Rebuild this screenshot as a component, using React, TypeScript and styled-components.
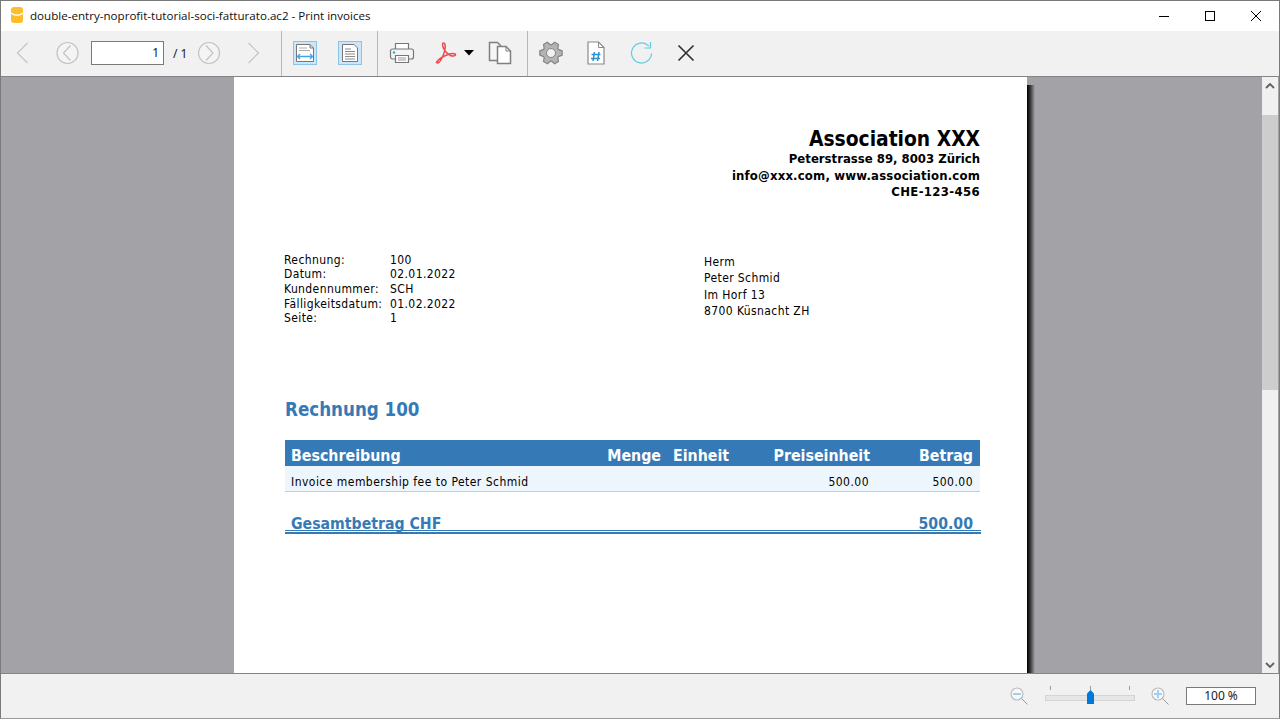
import { createGlobalStyle } from 'styled-components';
import styled from 'styled-components';

const GlobalStyle = createGlobalStyle`
	html, body {
		margin: 0;
		padding: 0;
		background: #fff;
		overflow: hidden;
	}
	* {
		box-sizing: border-box;
	}
`;

const docFont = `'DejaVu Sans Condensed', 'DejaVu Sans', sans-serif`;
const uiFont = `'Noto Sans', 'Open Sans', sans-serif`;

const Window = styled.div`
	width: 1280px;
	height: 719px;
	display: flex;
	flex-direction: column;
	border: 1px solid #7a7a7a;
	border-bottom-color: #9a9a9a;
	font-family: ${uiFont};
	color: #000;
`;

const TitleBar = styled.div`
	height: 30px;
	display: flex;
	align-items: center;
	background: #fff;
	padding-left: 9px;
	flex: none;
`;

const TitleText = styled.span`
	margin-left: 6px;
	font-size: 11.6px;
	line-height: 30px;
	color: #101010;
	font-family: 'Open Sans', sans-serif;
`;

const WindowButtons = styled.div`
	margin-left: auto;
	display: flex;
	align-items: center;
`;

const WindowButton = styled.div`
	width: 46px;
	height: 30px;
	display: flex;
	align-items: center;
	justify-content: center;
`;

const Toolbar = styled.div`
	height: 46px;
	flex: none;
	display: flex;
	align-items: center;
	background: #f1f1f1;
	border-bottom: 1px solid #838388;
	padding-left: 15px;
`;

const ToolSlot = styled.div<{ $w: number; $pad?: number }>`
	width: ${(p) => p.$w}px;
	height: 45px;
	padding-left: ${(p) => p.$pad ?? 0}px;
	padding-bottom: 1px;
	flex: none;
	display: flex;
	align-items: center;
`;

const Divider = styled.div`
	width: 1px;
	height: 45px;
	background: #b6b6b6;
	flex: none;
`;

const PageInput = styled.div`
	width: 73px;
	height: 24px;
	margin-bottom: 1px;
	border: 1px solid #7a7a7a;
	background: #fff;
	font-size: 12px;
	line-height: 22px;
	text-align: right;
	padding-right: 4px;
	color: #222;
	flex: none;
`;

const PageTotal = styled.span`
	width: 34px;
	flex: none;
	font-size: 12px;
	color: #222;
	padding-left: 9px;
`;

const CaretWrap = styled.span`
	margin-left: 7px;
	display: block;
`;

const Viewer = styled.div`
	flex: 1;
	min-height: 0;
	display: flex;
	background: #a3a2a6;
	overflow: hidden;
`;

const PageColumn = styled.div`
	flex: 1;
	padding-left: 233px;
`;

const Sheet = styled.div`
	position: relative;
	width: 793px;
	height: 100%;
	background: #fff;
	padding: 50px 47px 0 50px;
	font-family: ${docFont};
	&::after {
		content: '';
		position: absolute;
		left: 100%;
		top: 8px;
		bottom: 0;
		width: 8px;
		background: linear-gradient(to right, #000, #333 40%, #a3a2a6);
	}
`;

const Sender = styled.div`
	text-align: right;
	font-weight: 700;
	color: #000;
`;

const SenderName = styled.div`
	font-size: 20.8px;
	line-height: 24px;
	height: 23px;
`;

const SenderLine = styled.div<{ $ls?: number }>`
	font-size: 13px;
	line-height: 17px;
	height: 16.6px;
	letter-spacing: ${(p) => p.$ls ?? 0}px;
`;

const InfoRow = styled.div`
	display: flex;
	margin-top: 53px;
	font-size: 12px;
	color: #000;
`;

const InvoiceInfo = styled.div`
	width: 420px;
	display: grid;
	grid-template-columns: 106px 1fr;
	grid-auto-rows: 14.6px;
	line-height: 14.6px;
	letter-spacing: 0.4px;
`;

const Address = styled.div`
	padding-top: 1px;
	line-height: 16.5px;
	letter-spacing: 0.4px;
`;

const Heading = styled.h1`
	margin: 71px 0 0 1px;
	font-size: 18.6px;
	line-height: 26px;
	font-weight: 700;
	color: #357ab6;
`;

const Table = styled.div`
	margin: 17px 0 0 1px;
	width: 695px;
`;

const Columns = styled.div`
	display: grid;
	grid-template-columns: 312px 70px 66px 142px 105px;
`;

const HeadRow = styled(Columns)`
	height: 26px;
	background: #357ab6;
	color: #fff;
	font-size: 15.8px;
	font-weight: 700;
	line-height: 31px;
`;

const BodyRow = styled(Columns)`
	height: 26px;
	background: #eef6fd;
	border-bottom: 1px solid #bcd0e2;
	font-size: 12px;
	line-height: 32px;
	letter-spacing: 0.47px;
`;

const Cell = styled.div<{ $right?: boolean; $pad?: number }>`
	text-align: ${(p) => (p.$right ? 'right' : 'left')};
	padding: ${(p) => (p.$right ? `0 ${p.$pad ?? 7}px 0 0` : `0 0 0 ${p.$pad ?? 6}px`)};
	white-space: nowrap;
`;

const TotalRow = styled.div`
	margin: 21px 0 0 1px;
	width: 696px;
`;

const TotalText = styled.div`
	height: 17px;
	display: flex;
	justify-content: space-between;
	padding: 0 8px 0 6px;
	font-size: 15.7px;
	font-weight: 700;
	line-height: 21px;
	color: #357ab6;
`;

const TotalRule = styled.div`
	height: 4px;
	border-top: 1px solid #357ab6;
	border-bottom: 2px solid #357ab6;
`;

const Scrollbar = styled.div`
	width: 16px;
	flex: none;
	margin-right: 1px;
	background: #f0f0f0;
	display: flex;
	flex-direction: column;
`;

const ScrollArrow = styled.div`
	height: 17px;
	flex: none;
	display: flex;
	align-items: center;
	justify-content: center;
`;

const ScrollThumb = styled.div`
	height: 275px;
	margin: 21px 0 0;
	background: #cdcdcd;
	flex: none;
`;

const ScrollSpacer = styled.div`
	flex: 1;
`;

const StatusBar = styled.div`
	height: 45px;
	flex: none;
	display: flex;
	align-items: center;
	background: #f1f1f1;
	border-top: 1px solid #838388;
	padding-left: 1009px;
`;

const ZoomSlider = styled.div`
	position: relative;
	width: 90px;
	height: 20px;
	margin: 0 16px 0 17px;
	flex: none;
	&::before {
		content: '';
		position: absolute;
		left: 0;
		right: 0;
		top: 9px;
		height: 4px;
		background: #e6e6e6;
		border: 1px solid #d4d4d4;
	}
`;

const SliderTick = styled.span<{ $x: number }>`
	position: absolute;
	left: ${(p) => p.$x}px;
	top: 0;
	width: 1px;
	height: 4px;
	background: #9a9a9a;
`;

const SliderHandle = styled.svg`
	position: absolute;
	left: 42px;
	top: 4px;
`;

const ZoomValue = styled.div`
	width: 70px;
	height: 18px;
	margin-left: 17px;
	border: 1px solid #7a7a7a;
	background: #fff;
	font-size: 12px;
	line-height: 16px;
	text-align: center;
	color: #222;
	flex: none;
`;

function Icon({ w = 24, h = 24, children }: { w?: number; h?: number; children: React.ReactNode }) {
	return (
		<svg width={w} height={h} viewBox={`0 0 ${w} ${h}`} fill="none" style={{ display: 'block', flex: 'none' }}>
			{children}
		</svg>
	);
}

function AppLogo() {
	return (
		<Icon w={14} h={18}>
			<path d="M1 3c0-2 1-3 3-3h6c2 0 3 1 3 3v10c0 2-1 3-3 3H4c-2 0-3-1-3-3z" fill="#fdbd2c" />
			<path d="M1 6c3 3 9 3 12 0" stroke="#fff" strokeWidth="1.400" />
		</Icon>
	);
}

const Chevron = ({ dir }: { dir: 'l' | 'r' }) => (
	<Icon w={14} h={24}>
		<path d={dir === 'l' ? 'M11.500 2 1.500 12l10 10' : 'M1.500 2l10 10-10 10'} stroke="#c4c4c4" strokeWidth="1.200" />
	</Icon>
);

const CircleChevron = ({ dir }: { dir: 'l' | 'r' }) => (
	<Icon w={24} h={24}>
		<g transform={dir === 'l' ? 'translate(0.5 0)' : 'translate(-1 0)'}>
			<circle cx="12" cy="12" r="10.500" stroke="#c2c2c2" strokeWidth="1.200" fill="#f4f4f4" />
			<path d={dir === 'l' ? 'M15 4.500 8 12l7 7.500' : 'M9 4.500l7 7.500-7 7.500'} stroke="#c2c2c2" strokeWidth="1.200" />
		</g>
	</Icon>
);

const FitWidth = () => (
	<Icon w={24} h={24}>
		<rect x="0.500" y="0.500" width="23" height="23" fill="#cde6f7" stroke="#8cc3e8" />
		<path d="M3.500 3.500H17L20.500 7v13.500h-17z" fill="#fff" stroke="#777" />
		<path d="M17 3.500V7h3.500" stroke="#777" />
		<path d="M6 7h8M6 9.500h11" stroke="#aaa" />
		<path d="M5 15.500h14M7 13l-2.500 2.500L7 18M17 13l2.500 2.500L17 18" stroke="#4aa3e0" strokeWidth="1.400" />
	</Icon>
);

const FitPage = () => (
	<Icon w={24} h={24}>
		<rect x="0.500" y="0.500" width="23" height="23" fill="#cde6f7" stroke="#8cc3e8" />
		<path d="M4.500 3.500H16L19.500 7v13.500h-15z" fill="#fff" stroke="#777" />
		<path d="M7 8h6M7 10.500h10M7 13h10M7 15.500h10M7 18h10" stroke="#8a8a8a" />
	</Icon>
);

const Printer = () => (
	<Icon w={26} h={24}>
		<path d="M6.500 8V2.500h13V8" fill="#fff" stroke="#777" strokeWidth="1.200" />
		<rect x="1.500" y="8" width="23" height="10" rx="2" fill="#f4f4f4" stroke="#777" strokeWidth="1.200" />
		<circle cx="5" cy="11.500" r="1.200" fill="#35a3dc" />
		<path d="M6.500 14.500h13v7h-13z" fill="#fff" stroke="#777" strokeWidth="1.200" />
		<path d="M9 17h8M9 19h8" stroke="#999" strokeWidth="1.200" />
	</Icon>
);

const Pdf = () => (
	<Icon w={22} h={24}>
		<path
			d="M1.500 21.500c1.500 1.500 4-1 6-5.500 1.500-3.500 3.500-8 2.500-12.500-.5-2-2.500-2-2.500 0 0 4 4.500 9.500 8 11 2 .8 5 .5 5-.8 0-1.500-4-1.500-8 0-4 1.300-9 4.500-11 7.800z"
			stroke="#f0494e"
			strokeWidth="1.500"
		/>
	</Icon>
);

const Caret = () => (
	<Icon w={10} h={6}>
		<path d="M0 0h10L5 5.500z" fill="#000" />
	</Icon>
);

const Copies = () => (
	<Icon w={24} h={24}>
		<path d="M1.500 1.500h8l3 3v15h-11z" fill="#f6f6f6" stroke="#808080" strokeWidth="1.500" />
		<path d="M9.500 5.500H18l4.500 4.500v12.500h-13z" fill="#fff" stroke="#808080" strokeWidth="1.500" />
		<path d="M18 5.500V10h4.500" stroke="#808080" />
	</Icon>
);

// six teeth, one every 60 degrees starting on the horizontal axis
const gearPath = Array.from({ length: 6 }, (_, i) => {
	const at = (r: number, deg: number) => {
		const a = ((i * 60 + deg) * Math.PI) / 180;
		return `${(12 + r * Math.cos(a)).toFixed(2)} ${(12 + r * Math.sin(a)).toFixed(2)}`;
	};
	return `${i === 0 ? 'M' : 'L'}${at(8.2, -26)} L${at(11.4, -11)} L${at(11.4, 11)} L${at(8.2, 26)}`;
}).join(' ');

const Gear = () => (
	<Icon w={24} h={24}>
		<path d={`${gearPath} Z`} fill="#b4b4b4" stroke="#858585" strokeWidth="1.200" strokeLinejoin="round" />
		<circle cx="12" cy="12" r="4.500" fill="#f1f1f1" stroke="#858585" />
	</Icon>
);

const HashDoc = () => (
	<Icon w={18} h={24}>
		<path d="M1 1h10.500L17 6.500V23H1z" fill="#fff" stroke="#8a8a8a" strokeWidth="1.200" />
		<path d="M11.500 1v5.500H17" stroke="#8a8a8a" />
		<path d="M7.500 11 6 20M12 11l-1.500 9M4.500 13.500h9M4 17.500h9" stroke="#2f8fd0" strokeWidth="1.500" />
	</Icon>
);

const Refresh = () => (
	<Icon w={24} h={24}>
		<path d="M21.500 12.500A10 10 0 1 1 17.500 4L19 5" stroke="#63cbe2" strokeWidth="1.200" />
		<path d="M20.500 1v6h-6" stroke="#63cbe2" strokeWidth="1.200" />
	</Icon>
);

const CloseCross = () => (
	<Icon w={18} h={18}>
		<path d="M1.500 1.500l15 15M16.500 1.500l-15 15" stroke="#333" strokeWidth="1.700" />
	</Icon>
);

const Magnifier = ({ plus }: { plus?: boolean }) => (
	<Icon w={18} h={18}>
		<circle cx="7" cy="7" r="6" fill="#f8f8f8" stroke="#bdbdbd" strokeWidth="1.200" />
		<path d="M11.500 11.500l6 6" stroke="#999" />
		<path d={plus ? 'M3 7h8M7 3v8' : 'M3 7h8'} stroke="#9ed0f0" strokeWidth="2" />
	</Icon>
);

export default function App() {
	return (
		<>
			<GlobalStyle />
			<Window>
				<TitleBar>
					<AppLogo />
					<TitleText>double-entry-noprofit-tutorial-soci-fatturato.ac2 - Print invoices</TitleText>
					<WindowButtons>
						<WindowButton>
							<Icon w={10} h={10}>
								<path d="M0 5.500h10" stroke="#000" />
							</Icon>
						</WindowButton>
						<WindowButton>
							<Icon w={10} h={10}>
								<rect x="0.500" y="0.500" width="9" height="9" stroke="#000" />
							</Icon>
						</WindowButton>
						<WindowButton>
							<Icon w={10} h={10}>
								<path d="M0 0l10 10M10 0 0 10" stroke="#000" />
							</Icon>
						</WindowButton>
					</WindowButtons>
				</TitleBar>
				<Toolbar>
					<ToolSlot $w={39}>
						<Chevron dir="l" />
					</ToolSlot>
					<ToolSlot $w={36}>
						<CircleChevron dir="l" />
					</ToolSlot>
					<PageInput>1</PageInput>
					<PageTotal>/ 1</PageTotal>
					<ToolSlot $w={49}>
						<CircleChevron dir="r" />
					</ToolSlot>
					<ToolSlot $w={34}>
						<Chevron dir="r" />
					</ToolSlot>
					<Divider />
					<ToolSlot $w={45} $pad={11}>
						<FitWidth />
					</ToolSlot>
					<ToolSlot $w={50} $pad={11}>
						<FitPage />
					</ToolSlot>
					<Divider />
					<ToolSlot $w={57} $pad={11}>
						<Printer />
					</ToolSlot>
					<ToolSlot $w={53}>
						<Pdf />
						<CaretWrap>
							<Caret />
						</CaretWrap>
					</ToolSlot>
					<ToolSlot $w={39}>
						<Copies />
					</ToolSlot>
					<Divider />
					<ToolSlot $w={50} $pad={11}>
						<Gear />
					</ToolSlot>
					<ToolSlot $w={45} $pad={9}>
						<HashDoc />
					</ToolSlot>
					<ToolSlot $w={47} $pad={7}>
						<Refresh />
					</ToolSlot>
					<ToolSlot $w={30} $pad={7}>
						<CloseCross />
					</ToolSlot>
				</Toolbar>
				<Viewer>
					<PageColumn>
						<Sheet>
							<Sender>
								<SenderName>Association XXX</SenderName>
								<SenderLine>Peterstrasse 89, 8003 Zürich</SenderLine>
								<SenderLine $ls={0.18}>info@xxx.com, www.association.com</SenderLine>
								<SenderLine $ls={0.35}>CHE-123-456</SenderLine>
							</Sender>
							<InfoRow>
								<InvoiceInfo>
									<span>Rechnung:</span>
									<span>100</span>
									<span>Datum:</span>
									<span>02.01.2022</span>
									<span>Kundennummer:</span>
									<span>SCH</span>
									<span>Fälligkeitsdatum:</span>
									<span>01.02.2022</span>
									<span>Seite:</span>
									<span>1</span>
								</InvoiceInfo>
								<Address>
									<div>Herm</div>
									<div>Peter Schmid</div>
									<div>Im Horf 13</div>
									<div>8700 Küsnacht ZH</div>
								</Address>
							</InfoRow>
							<Heading>Rechnung 100</Heading>
							<Table>
								<HeadRow>
									<Cell>Beschreibung</Cell>
									<Cell $right $pad={6}>
										Menge
									</Cell>
									<Cell $pad={6}>Einheit</Cell>
									<Cell $right $pad={5}>
										Preiseinheit
									</Cell>
									<Cell $right>Betrag</Cell>
								</HeadRow>
								<BodyRow>
									<Cell>Invoice membership fee to Peter Schmid</Cell>
									<Cell />
									<Cell />
									<Cell $right $pad={6}>
										500.00
									</Cell>
									<Cell $right>500.00</Cell>
								</BodyRow>
							</Table>
							<TotalRow>
								<TotalText>
									<span>Gesamtbetrag CHF</span>
									<span>500.00</span>
								</TotalText>
								<TotalRule />
							</TotalRow>
						</Sheet>
					</PageColumn>
					<Scrollbar>
						<ScrollArrow>
							<Icon w={10} h={6}>
								<path d="M1 5l4-4 4 4" stroke="#606060" strokeWidth="1.800" />
							</Icon>
						</ScrollArrow>
						<ScrollThumb />
						<ScrollSpacer />
						<ScrollArrow>
							<Icon w={10} h={6}>
								<path d="M1 1l4 4 4-4" stroke="#606060" strokeWidth="1.800" />
							</Icon>
						</ScrollArrow>
					</Scrollbar>
				</Viewer>
				<StatusBar>
					<Magnifier />
					<ZoomSlider>
						<SliderTick $x={5} />
						<SliderTick $x={45} />
						<SliderTick $x={84} />
						<SliderHandle width="7" height="14" viewBox="0 0 7 14">
							<path d="M0 3.500 3.500 0 7 3.500V14H0z" fill="#0078d7" />
						</SliderHandle>
					</ZoomSlider>
					<Magnifier plus />
					<ZoomValue>100 %</ZoomValue>
				</StatusBar>
			</Window>
		</>
	);
}
